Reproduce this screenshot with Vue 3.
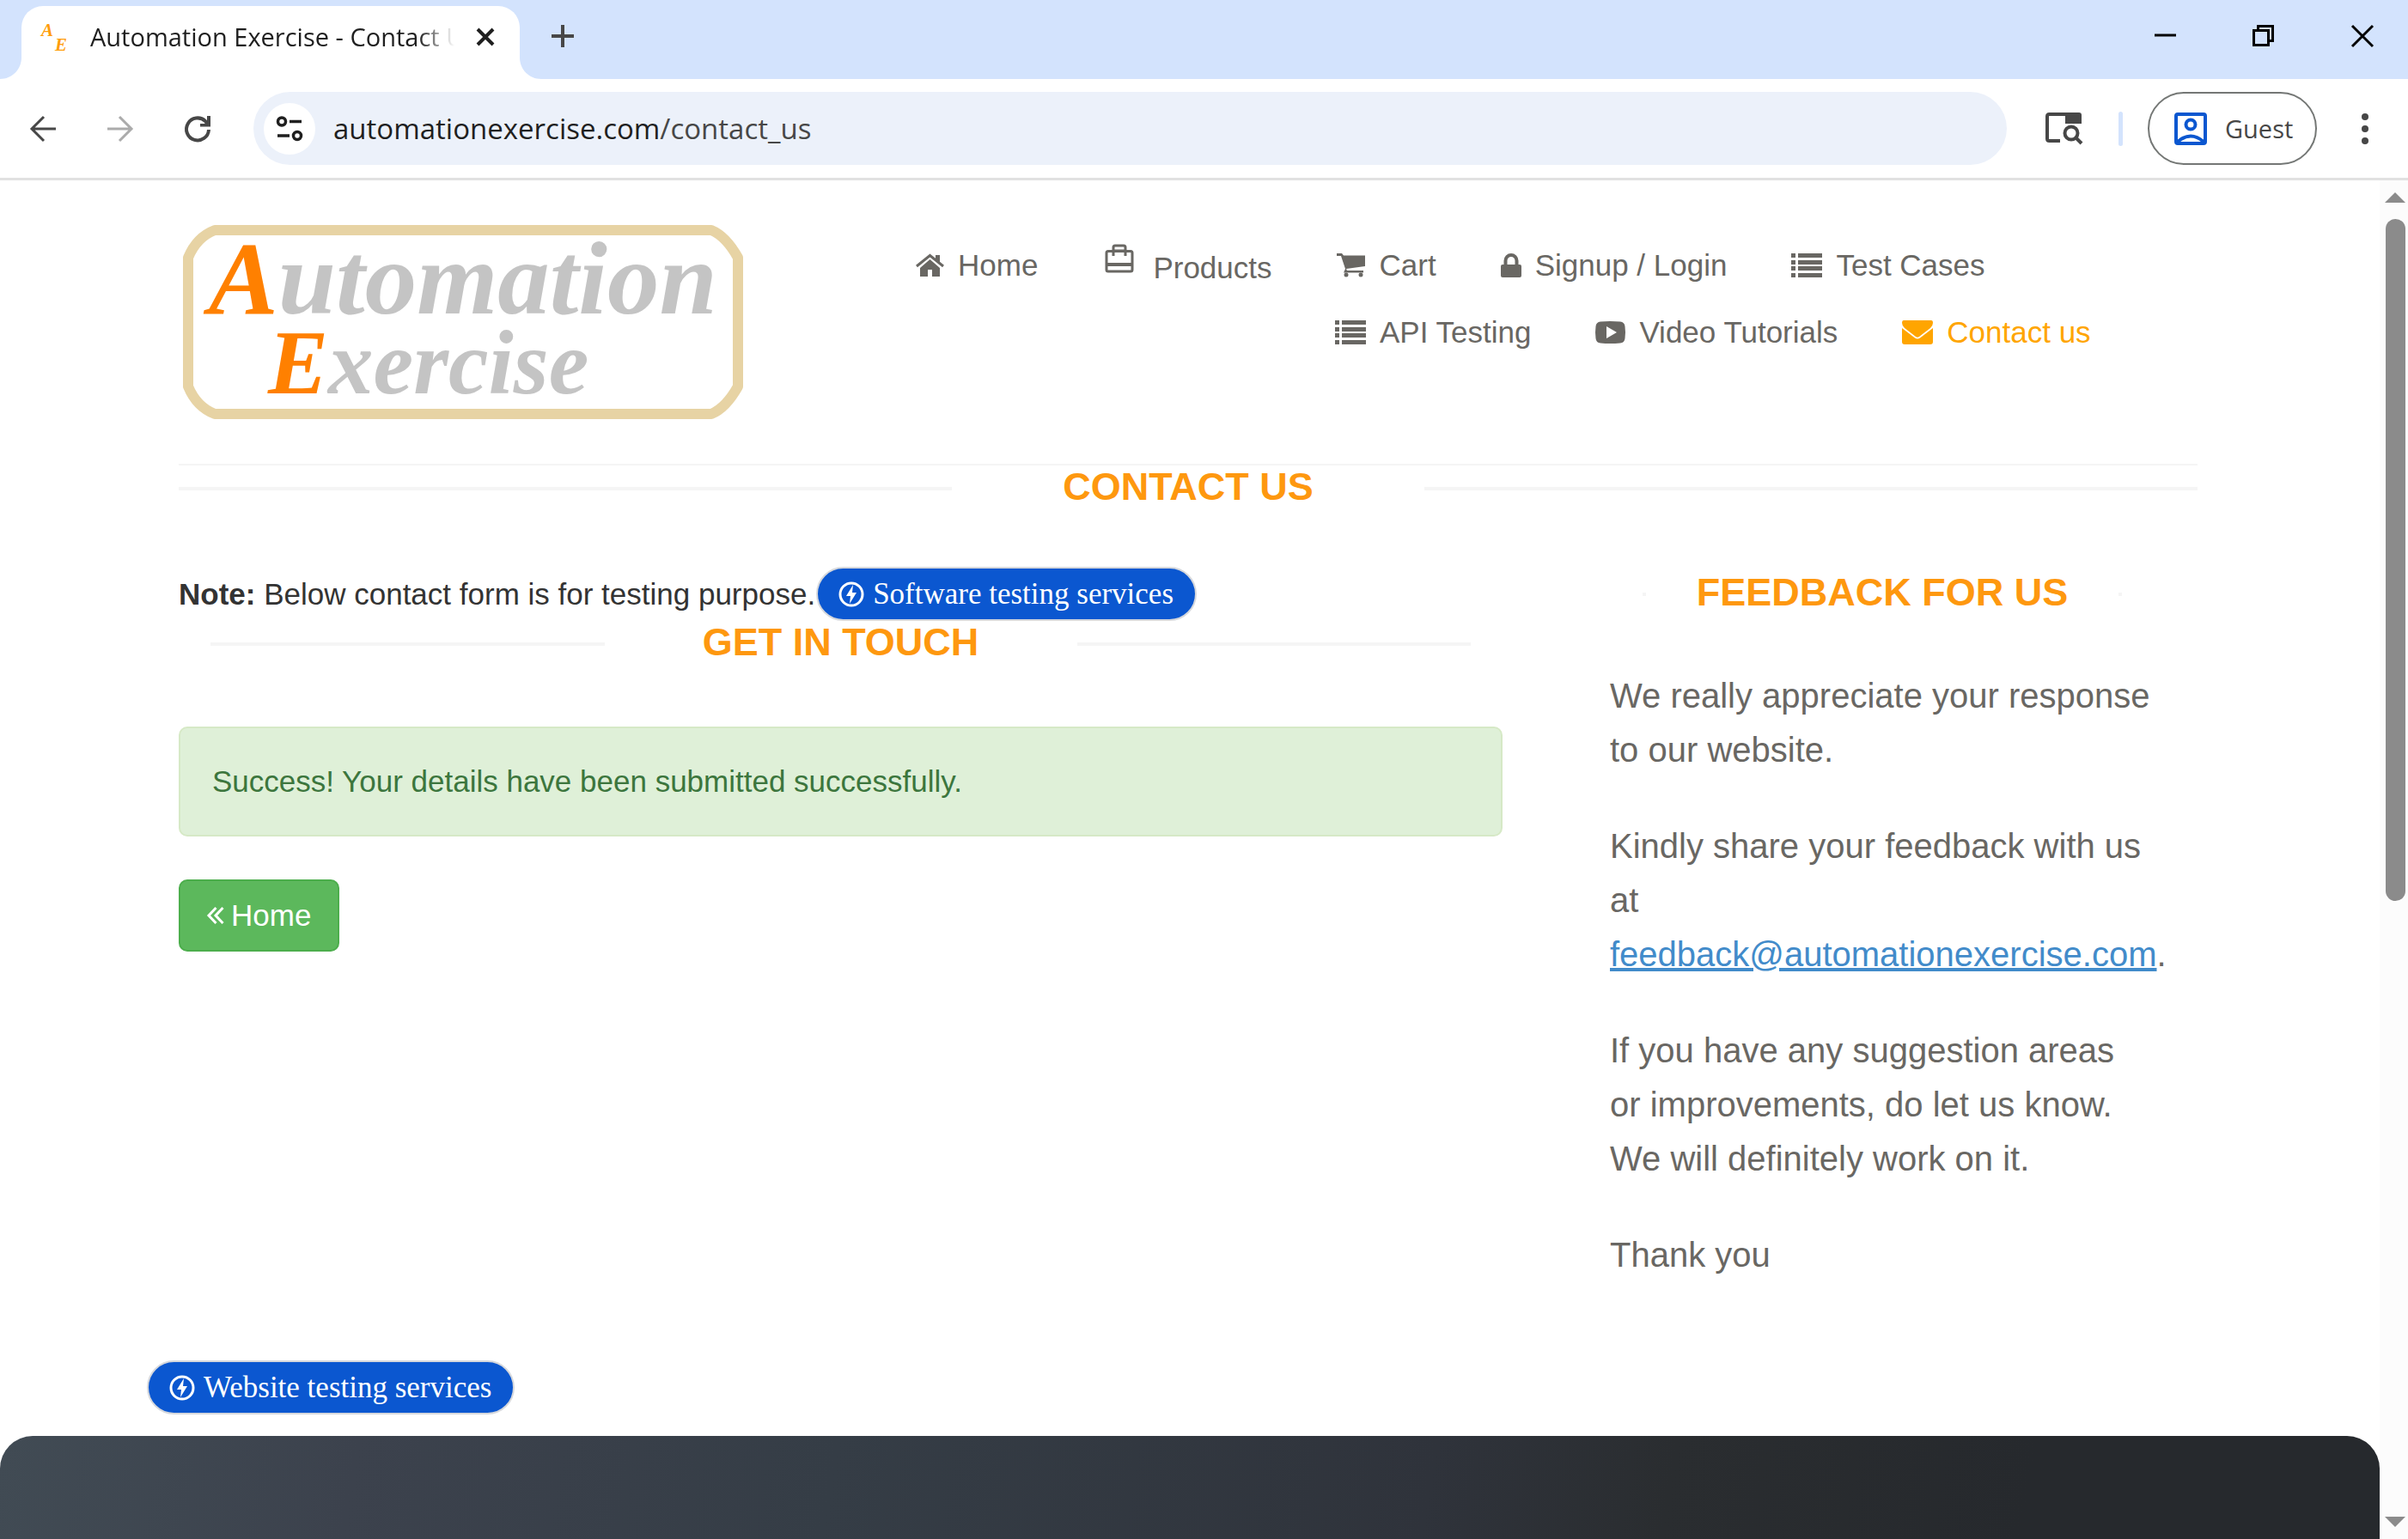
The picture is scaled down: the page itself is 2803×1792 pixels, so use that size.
<script setup>
const rowOne = [
  { label: 'Home', icon: 'home' },
  { label: 'Products', icon: 'bag' },
  { label: 'Cart', icon: 'cart' },
  { label: 'Signup / Login', icon: 'lock' },
  { label: 'Test Cases', icon: 'list' },
]
const rowTwo = [
  { label: 'API Testing', icon: 'list' },
  { label: 'Video Tutorials', icon: 'video' },
  { label: 'Contact us', icon: 'mail', active: true },
]
const rows = [rowOne, rowTwo]
</script>

<template>
  <div class="window">
    <div class="tabstrip">
      <div class="tab">
        <svg class="favicon" viewBox="0 0 36 36" aria-hidden="true">
          <g font-family="Liberation Serif, serif" font-style="italic" font-weight="bold" font-size="21" fill="#ff9d0a">
            <text x="3" y="17">A</text>
            <text x="19" y="34">E</text>
          </g>
        </svg>
        <span class="tab-title">Automation Exercise - Contact Us</span>
        <button class="bare tab-close" aria-label="Close tab">
          <svg viewBox="0 0 20 20"><path d="M1 1L19 19M19 1L1 19" stroke="#1f1f1f" stroke-width="4" /></svg>
        </button>
        <svg class="flare left" viewBox="0 0 25 25"><path d="M25 0V25H0C14 25 25 14 25 0Z" fill="#fff" /></svg>
        <svg class="flare right" viewBox="0 0 25 25"><path d="M0 0V25H25C11 25 0 14 0 0Z" fill="#fff" /></svg>
      </div>
      <button class="bare new-tab" aria-label="New tab">
        <svg viewBox="0 0 26 26"><path d="M13 0V26M0 13H26" stroke="#474747" stroke-width="4" /></svg>
      </button>
      <div class="controls">
        <button class="bare" aria-label="Minimize">
          <svg viewBox="0 0 26 26"><path d="M1 12H26" stroke="#000" stroke-width="3" /></svg>
        </button>
        <button class="bare" aria-label="Restore">
          <svg viewBox="0 0 26 26"><path d="M1.500 6.500H18.500V23.500H1.500ZM6.500 6V1.500H23.500V18.500H19" fill="none" stroke="#000" stroke-width="3" /></svg>
        </button>
        <button class="bare" aria-label="Close">
          <svg viewBox="0 0 26 26"><path d="M1 1L25 25M25 1L1 25" stroke="#000" stroke-width="3" /></svg>
        </button>
      </div>
    </div>

    <div class="toolbar">
      <button class="bare nav-button" aria-label="Back">
        <svg viewBox="0 0 30 30"><path d="M30 15H3M16 1L2 15L16 29" fill="none" stroke="#474747" stroke-width="3" /></svg>
      </button>
      <button class="bare nav-button" aria-label="Forward">
        <svg viewBox="0 0 30 30"><path d="M0 15H27M14 1L28 15L14 29" fill="none" stroke="#ababab" stroke-width="3" /></svg>
      </button>
      <button class="bare nav-button" aria-label="Reload">
        <svg viewBox="0 0 30 30"><path d="M28 16A13 13 0 1 1 24 6L27 10" fill="none" stroke="#474747" stroke-width="4" /><path d="M30 0V12.500H18V9H26V0Z" fill="#474747" /></svg>
      </button>
      <div class="omnibox">
        <button class="bare site-info" aria-label="Site information">
          <svg viewBox="0 0 30 30"><g fill="none" stroke="#1f1f1f"><circle cx="6" cy="6.500" r="4.500" stroke-width="3.500" /><circle cx="24" cy="23" r="4.500" stroke-width="3.500" /><path d="M15 6.500H29M1 23H15" stroke-width="3.500" /></g></svg>
        </button>
        <span class="url">automationexercise.com<span>/contact_us</span></span>
      </div>
      <button class="bare lens" aria-label="Search tabs">
        <svg viewBox="0 0 44 38"><path d="M17 33H4.500Q2 33 2 30.500V4.500Q2 2 4.500 2H38" fill="none" stroke="#474747" stroke-width="4" /><path d="M23 0H39Q42 0 42 3V13H23Z" fill="#474747" /><circle cx="30" cy="24" r="7.500" fill="none" stroke="#474747" stroke-width="4" /><path d="M35 29L42 36" stroke="#474747" stroke-width="4" /></svg>
      </button>
      <span class="divider"></span>
      <button class="guest">
        <svg viewBox="0 0 38 38"><g fill="none" stroke="#0b57d0" stroke-width="4"><rect x="2" y="2" width="34" height="34" rx="2" /><circle cx="19" cy="14" r="5.500" /><path d="M4 34Q19 21 34 34" /></g></svg>
        <span>Guest</span>
      </button>
      <button class="bare menu" aria-label="Menu">
        <svg viewBox="0 0 8 36"><g fill="#474747"><circle cx="4" cy="4" r="4" /><circle cx="4" cy="18" r="4" /><circle cx="4" cy="32" r="4" /></g></svg>
      </button>
    </div>

    <div class="viewport">
      <div class="page">
        <div class="container">
          <header class="header">
            <a href="#" class="logo" aria-label="Automation Exercise">
              <svg viewBox="0 0 652 226">
                <path d="M37 6H615Q632 13 646 38V188Q632 213 615 220H37Q16 212 6 188V38Q16 14 37 6Z" fill="#fff" stroke="#e7d3a4" stroke-width="12" stroke-linejoin="round" />
                <g font-family="Liberation Serif, serif" font-style="italic" font-weight="bold" fill="#c4c4c4">
                  <text x="30" y="103" font-size="121"><tspan fill="#ff8000">A</tspan>utomation</text>
                  <text x="99" y="196" font-size="105"><tspan fill="#ff8000">E</tspan>xercise</text>
                </g>
              </svg>
            </a>
            <nav>
              <ul v-for="(row, r) in rows" :key="r">
                <li v-for="item in row" :key="item.label">
                  <a href="#" :class="[item.icon, { active: item.active }]">
                    <svg v-if="item.icon === 'home'" width="33" height="26" viewBox="0 0 33 26"><path d="M16.500 6L28 16V26H19V18H14V26H5V16Z" /><path d="M1 14L16.500 1.500L32 14" fill="none" stroke="currentColor" stroke-width="3" /><path d="M23 1H28V11L23 7Z" /></svg>
                    <svg v-else-if="item.icon === 'bag'" width="34" height="34" viewBox="0 0 34 34"><path d="M10 14V8H24V14M4 8.500H30Q32 8.500 32 10.500V30Q32 32 30 32H4Q2 32 2 30V10.500Q2 8.500 4 8.500ZM10 8V4Q10 2 12 2H22Q24 2 24 4V8" fill="none" stroke="currentColor" stroke-width="3" /><path d="M2 22H32V26H2Z" /></svg>
                    <svg v-else-if="item.icon === 'cart'" width="34" height="28" viewBox="0 0 34 28"><path d="M0 0H6L8 2.500H33V15L11 18L12 20H31V22.500H8L10 18L5 3H0Z" /><circle cx="11" cy="25" r="2.500" /><circle cx="28" cy="25" r="2.500" /></svg>
                    <svg v-else-if="item.icon === 'lock'" width="24" height="28" viewBox="0 0 24 28"><path d="M5.500 14V8.500A6.500 6.500 0 0 1 18.500 8.500V14" fill="none" stroke="currentColor" stroke-width="4" /><rect y="13" width="24" height="15" rx="2" /></svg>
                    <svg v-else-if="item.icon === 'list'" width="36" height="28" viewBox="0 0 36 28"><path d="M0 0H5V5H0ZM8 0H36V5H8ZM0 8H5V13H0ZM8 8H36V13H8ZM0 15H5V20H0ZM8 15H36V20H8ZM0 23H5V28H0ZM8 23H36V28H8Z" /></svg>
                    <svg v-else-if="item.icon === 'video'" width="35" height="26" viewBox="0 0 35 26"><path fill-rule="evenodd" d="M6 0.500Q17 -0.500 29 0.500Q34 1 34.500 6Q35.500 13 34.500 20Q34 25 29 25.500Q17 26.500 6 25.500Q1 25 0.500 20Q-0.500 13 0.500 6Q1 1 6 0.500ZM13 6V20L25 13Z" /></svg>
                    <svg v-else width="36" height="28" viewBox="0 0 36 28"><path d="M2 0H34Q36 0 36 3Q36 6 33 9L20 19Q18 20.500 16 19L3 9Q0 6 0 3Q0 0 2 0Z" /><path d="M0 9L15 20.500Q18 22.500 21 20.500L36 9V25Q36 28 33 28H3Q0 28 0 25Z" /></svg>
                    <span>{{ item.label }}</span>
                  </a>
                </li>
              </ul>
            </nav>
          </header>

          <h2 class="title"><span>Contact Us</span></h2>

          <div class="columns">
            <main>
              <div class="note">
                <span><b>Note:</b> Below contact form is for testing purpose.</span>
                <a href="#" class="pill">
                  <svg viewBox="0 0 30 30"><circle cx="15" cy="15" r="13" fill="none" stroke="#fff" stroke-width="3" /><path d="M17 4L9 17H14L13 26L21 13H16Z" fill="#fff" /></svg>
                  <span>Software testing services</span>
                </a>
              </div>
              <h2 class="title inset"><span>Get In Touch</span></h2>
              <div class="alert" role="status">Success! Your details have been submitted successfully.</div>
              <a href="#" class="home-button">
                <svg viewBox="0 0 20 20"><path d="M10.500 1L2 10L10.500 19M18.500 1L10 10L18.500 19" fill="none" stroke="#fff" stroke-width="3" /></svg>
                <span>Home</span>
              </a>
            </main>
            <aside>
              <h2 class="title"><span>Feedback For Us</span></h2>
              <p>We really appreciate your response to our website.</p>
              <p>Kindly share your feedback with us at <a href="#">feedback@automationexercise.com</a>.</p>
              <p>If you have any suggestion areas or improvements, do let us know. We will definitely work on it.</p>
              <p>Thank you</p>
            </aside>
          </div>
        </div>
        <div class="bottom-ad">
          <a href="#" class="pill">
            <svg viewBox="0 0 30 30"><circle cx="15" cy="15" r="13" fill="none" stroke="#fff" stroke-width="3" /><path d="M17 4L9 17H14L13 26L21 13H16Z" fill="#fff" /></svg>
            <span>Website testing services</span>
          </a>
        </div>
        <footer></footer>
      </div>
      <div class="scrollbar">
        <svg viewBox="0 0 24 12"><path d="M12 0L24 12H0Z" fill="#8b8b8b" /></svg>
        <div class="track"><div class="thumb"></div></div>
        <svg viewBox="0 0 24 12"><path d="M0 0H24L12 12Z" fill="#8b8b8b" /></svg>
      </div>
    </div>
  </div>
</template>

<style>
body { margin: 0; background: #fff; }
</style>

<style scoped>
* { box-sizing: border-box; }
svg { display: block; flex: none; overflow: visible; }
button { font: inherit; cursor: pointer; }
.bare { border: 0; padding: 0; background: none; }
.window {
  display: flex;
  flex-direction: column;
  height: 100vh;
  overflow: hidden;
  font-family: "Liberation Sans", Arial, sans-serif;
  font-size: 35px;
  line-height: 50px;
  color: #333;
}

.tabstrip {
  display: flex;
  flex: none;
  height: 92px;
  padding-left: 25px;
  background: #d3e3fd;
  font-family: "Open Sans", "Noto Sans", sans-serif;
}
.tab {
  position: relative;
  display: flex;
  align-items: center;
  width: 580px;
  margin-top: 7px;
  padding: 0 30px 14px 20px;
  background: #fff;
  border-radius: 25px 25px 0 0;
}
.flare { position: absolute; bottom: 0; width: 25px; height: 25px; }
.flare.left { left: -25px; }
.flare.right { right: -25px; }
.favicon { width: 36px; height: 36px; }
.tab-title {
  flex: 1;
  margin: 0 26px 0 24px;
  overflow: hidden;
  white-space: nowrap;
  font-size: 29px;
  color: #1f1f1f;
  mask-image: linear-gradient(to right, #000 90%, transparent);
}
.tab-close svg { width: 20px; height: 20px; }
.new-tab { margin: 0 0 8px 37px; }
.new-tab svg { width: 26px; height: 26px; }
.controls { display: flex; gap: 89px; margin: 0 40px 8px auto; }
.controls svg { width: 26px; height: 26px; }

.toolbar {
  display: flex;
  flex: none;
  align-items: center;
  height: 118px;
  padding: 0 46px 0 35px;
  border-bottom: 3px solid #e1e1e1;
  font-family: "Open Sans", "Noto Sans", sans-serif;
}
.nav-button { margin-right: 60px; }
.nav-button svg { width: 30px; height: 30px; }
.nav-button:nth-child(3) { margin-right: 50px; }
.omnibox {
  display: flex;
  flex: 1;
  align-items: center;
  height: 85px;
  padding-left: 12px;
  border-radius: 43px;
  background: #ecf1fa;
}
.site-info {
  display: grid;
  place-items: center;
  width: 60px;
  height: 60px;
  border-radius: 50%;
  background: #fff;
}
.site-info svg { width: 30px; height: 30px; }
.url { margin-left: 21px; font-size: 33px; color: #1f1f1f; }
.url span { color: #474747; }
.lens { margin-left: 45px; }
.lens svg { width: 44px; height: 38px; }
.divider { width: 5px; height: 40px; margin: 0 29px 0 41px; border-radius: 3px; background: #d3e3fd; }
.guest {
  display: flex;
  align-items: center;
  gap: 21px;
  width: 197px;
  height: 85px;
  padding: 0 0 0 29px;
  border: 2px solid #747775;
  border-radius: 43px;
  background: #fff;
  font-size: 29px;
  color: #474747;
}
.guest svg { width: 38px; height: 38px; }
.menu { margin-left: 52px; }
.menu svg { width: 8px; height: 36px; }

.viewport { display: flex; flex: 1; min-height: 0; }
.page { flex: 1; display: flex; flex-direction: column; min-width: 0; }
.scrollbar {
  display: flex;
  flex-direction: column;
  align-items: center;
  width: 33px;
  padding: 14px 0 14px 3px;
  background: #fcfcfc;
}
.scrollbar svg { width: 24px; height: 12px; }
.track { flex: 1; width: 23px; margin: 19px 0; }
.thumb { height: 794px; border-radius: 12px; background: #8b8b8b; }

.container { width: 85%; max-width: 2354px; margin: 0 auto; padding-right: 4px; }
.header {
  display: flex;
  align-items: flex-start;
  justify-content: space-between;
  height: 332px;
  padding: 52px 29px 0 5px;
  border-bottom: 2px solid #f5f5f5;
}
.logo svg { width: 652px; height: 226px; }
nav { width: 1463px; }
nav ul {
  display: flex;
  gap: 75px;
  margin: 22px 0 25px;
  padding: 0;
  list-style: none;
}
nav ul + ul { padding-left: 488px; }
nav a {
  display: flex;
  align-items: center;
  gap: 16px;
  white-space: nowrap;
  text-decoration: none;
  color: #696763;
}
nav a.bag { gap: 22px; align-items: flex-start; margin-left: 3px; }
nav a.bag span { padding-top: 3px; }
nav a.active { color: #ffa500; }
nav svg { fill: currentColor; }

.title {
  display: flex;
  align-items: center;
  margin: 0;
  font-size: 45px;
  line-height: 50px;
  text-transform: uppercase;
  color: #fe980f;
}
.title::before, .title::after { content: ""; flex: 1; height: 4px; margin-top: 4px; background: #f5f5f5; }
.title span { width: 550px; text-align: center; }
.title.inset { margin: 0 37px 73px; }

.columns { display: flex; gap: 125px; margin-top: 68px; }
main { flex: 1; }
.note { display: flex; align-items: center; gap: 1px; }
.pill {
  display: flex;
  align-items: center;
  gap: 10px;
  height: 63px;
  padding: 0 25px 0 24px;
  border: 2px solid #d6d8dc;
  border-radius: 32px;
  background: #0b57d0;
  font-family: "Liberation Serif", "Times New Roman", serif;
  white-space: nowrap;
  text-decoration: none;
  color: #fff;
}
.pill svg { width: 30px; height: 30px; }
.alert {
  padding: 37px;
  border: 2px solid #d6e9c6;
  border-radius: 10px;
  background: #dff0d8;
  color: #3c763d;
}
.home-button {
  display: inline-flex;
  align-items: center;
  gap: 8px;
  height: 84px;
  margin-top: 50px;
  padding: 0 31px;
  border: 2px solid #4cae4c;
  border-radius: 10px;
  background: #5cb85c;
  text-decoration: none;
  color: #fff;
}
.home-button svg { width: 20px; height: 20px; }
aside { width: 684px; padding-right: 53px; color: #696763; }
aside .title { margin: 5px 0 64px 38px; width: 558px; }
aside p { margin: 0 0 49px; font-size: 40px; line-height: 63px; }
aside p a { color: #428bca; }

.bottom-ad { display: flex; margin: auto 0 25px 171px; }
footer {
  height: 120px;
  flex: none;
  border-radius: 38px 38px 0 0;
  background: linear-gradient(100deg, #414b54, #3c424d 15%, #353d46 35%, #2f333b 60%, #2a2d30 70%, #26292d 85%);
}
</style>
